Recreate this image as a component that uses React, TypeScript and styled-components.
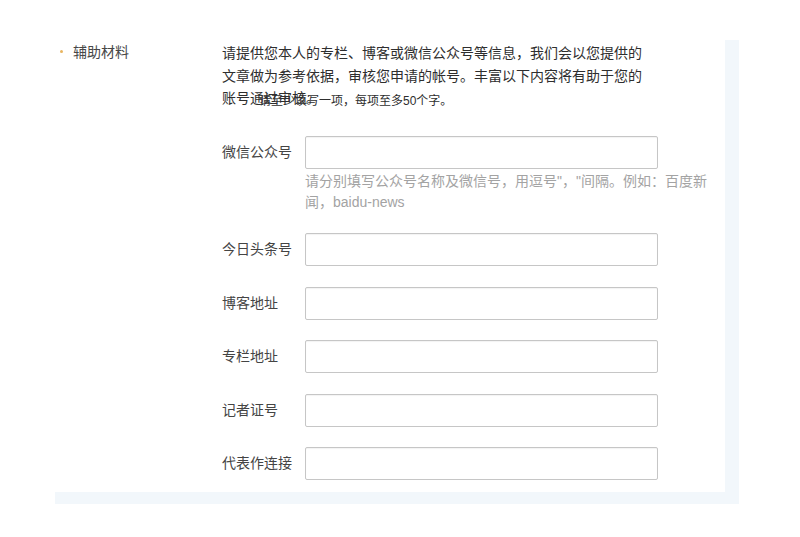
import styled, { createGlobalStyle } from "styled-components";

const GlobalStyle = createGlobalStyle`
  body {
    margin: 0;
    background: #fff;
    font-family: "Liberation Sans", "Noto Sans CJK SC", sans-serif;
  }
`;

const Page = styled.div`
  padding: 40px 0 0 55px;
`;

const Panel = styled.section`
  width: 670px;
  display: grid;
  grid-template-columns: 167px 1fr;
  padding-top: 1px;
  padding-bottom: 12px;
  border-right: 14px solid #f2f7fb;
  border-bottom: 12px solid #f2f7fb;
`;

const SectionTitle = styled.div`
  display: flex;
  align-items: center;
  gap: 10px;
  padding-left: 5px;
  height: 20px;
  font-size: 14px;
  color: #474747;
`;

const Dot = styled.span`
  width: 3px;
  height: 3px;
  border-radius: 50%;
  background: #e8b560;
`;

const Content = styled.div`
  display: flex;
  flex-direction: column;
`;

const Intro = styled.p`
  width: 425px;
  margin: 0;
  padding-top: 1px;
  font-size: 14px;
  line-height: 22.5px;
  color: #2e2e2e;
`;

const Overlap = styled.span`
  position: relative;
  white-space: nowrap;
`;

const Ghost = styled.span`
  position: absolute;
  left: 37px;
  top: 0;
  font-size: 12px;
  white-space: nowrap;
`;

const Form = styled.div`
  display: flex;
  flex-direction: column;
  gap: 20.5px;
  margin-top: 26px;
`;

const Row = styled.div`
  display: grid;
  grid-template-columns: 83px 353px;
`;

const Label = styled.label`
  font-size: 14px;
  line-height: 33px;
  color: #444;
  white-space: nowrap;
`;

const Input = styled.input`
  box-sizing: border-box;
  height: 33px;
  width: 100%;
  margin: 0;
  border: 1px solid #c6c6c6;
  border-radius: 2px;
  box-shadow: inset 0 1px 1px rgba(0, 0, 0, 0.05);
  background: #fff;
  outline: none;
`;

const Hint = styled.div`
  grid-column: 2;
  width: 412px;
  margin-top: 2px;
  font-size: 14px;
  line-height: 21px;
  color: #a3a3a3;
`;

const fields = [
  { label: "微信公众号", hint: '请分别填写公众号名称及微信号，用逗号"，"间隔。例如：百度新闻，baidu-news' },
  { label: "今日头条号" },
  { label: "博客地址" },
  { label: "专栏地址" },
  { label: "记者证号" },
  { label: "代表作连接" },
];

function App() {
  return (
    <Page>
      <GlobalStyle />
      <Panel>
        <SectionTitle>
          <Dot />
          辅助材料
        </SectionTitle>
        <Content>
          <Intro>
            请提供您本人的专栏、博客或微信公众号等信息，我们会以您提供的文章做为参考依据，审核您申请的帐号。丰富以下内容将有助于您的
            <Overlap>
              账号通过审核。
              <Ghost>请至少填写一项，每项至多50个字。</Ghost>
            </Overlap>
          </Intro>
          <Form>
            {fields.map((f) => (
              <Row key={f.label}>
                <Label>{f.label}</Label>
                <Input type="text" />
                {f.hint && <Hint>{f.hint}</Hint>}
              </Row>
            ))}
          </Form>
        </Content>
      </Panel>
    </Page>
  );
}

export default App;
